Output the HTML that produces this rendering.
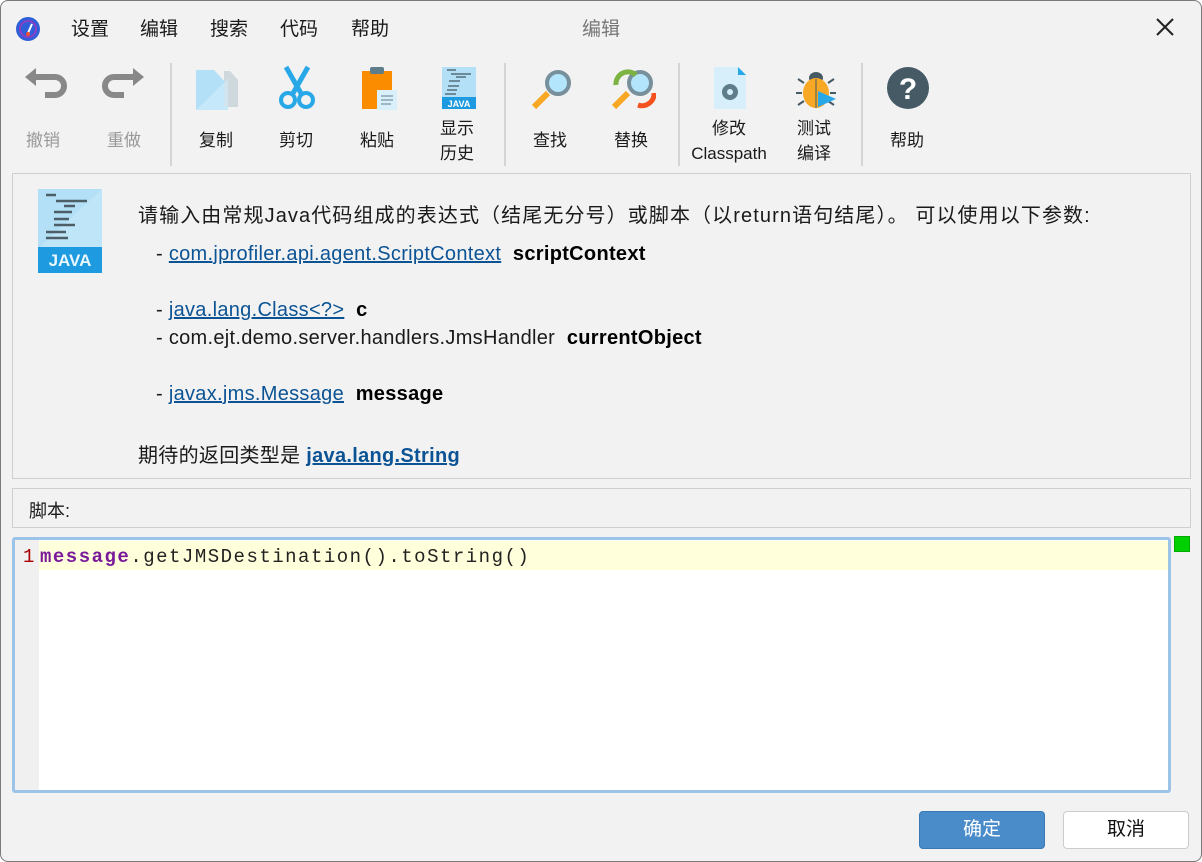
<!DOCTYPE html>
<html><head><meta charset="utf-8"><style>
body{margin:0;width:1202px;height:862px;overflow:hidden;background:#fff;font-family:"Liberation Sans","Noto Sans CJK SC",sans-serif;}
.win{position:absolute;left:0;top:0;width:1200px;height:860px;border:1px solid #7a7a7a;border-radius:8px;background:#f2f2f2;overflow:hidden}
.t{position:absolute;white-space:nowrap;color:#1a1a1a}
.menu{font-size:19px;top:13px}
.lbl{font-size:17px;text-align:center;width:90px;line-height:25px}
.sep{position:absolute;top:62px;width:2px;height:103px;background:#d4d4d4}
.ic{position:absolute}
a{color:#0b5394;text-decoration:underline}
.info{font-size:20px;letter-spacing:.3px}
</style></head><body><div class="win">
<svg class="ic" style="left:14px;top:15px" width="26" height="26"><circle cx="13" cy="13" r="12" fill="#2e5fd8"/><circle cx="13" cy="13" r="8" fill="none" stroke="#8a3fc4" stroke-width="2"/><line x1="13" y1="17" x2="17" y2="8" stroke="#fff" stroke-width="2"/><circle cx="13" cy="18" r="2" fill="#f05030"/></svg>
<div class="t menu" style="left:70px">设置</div><div class="t menu" style="left:139px">编辑</div><div class="t menu" style="left:209px">搜索</div><div class="t menu" style="left:279px">代码</div><div class="t menu" style="left:350px">帮助</div>
<div class="t menu" style="left:581px;color:#777">编辑</div>
<svg class="ic" style="left:1154px;top:16px" width="20" height="20"><path d="M2 2L18 18M18 2L2 18" stroke="#222" stroke-width="2"/></svg>
<svg class="ic" style="left:22px;top:66px" width="44" height="36"><path d="M10 10H32a9 9 0 0 1 0 18H22" fill="none" stroke="#888" stroke-width="6"/><path d="M2 10L13 1V19Z" fill="#888"/></svg>
<svg class="ic" style="left:101px;top:66px" width="44" height="36"><path d="M34 10H12a9 9 0 0 0 0 18H22" fill="none" stroke="#888" stroke-width="6"/><path d="M42 10L31 1V19Z" fill="#888"/></svg>
<div class="t lbl" style="left:-3px;top:127px;color:#999">撤销</div><div class="t lbl" style="left:78px;top:127px;color:#999">重做</div>
<div class="sep" style="left:169px"></div>
<svg class="ic" style="left:195px;top:68px" width="44" height="42"><path d="M0 1H18L32 16V41H0Z" fill="#b3e0f7"/><path d="M28 2H34L42 11V38H28Z" fill="#cfd8dc"/><path d="M0 41L32 10V41Z" fill="#d0eefc" opacity=".6"/></svg>
<svg class="ic" style="left:277px;top:64px" width="38" height="46"><path d="M8 2L24 30M30 2L14 30" stroke="#29a8e8" stroke-width="5"/><circle cx="10" cy="35" r="7" fill="none" stroke="#29a8e8" stroke-width="4"/><circle cx="28" cy="35" r="7" fill="none" stroke="#29a8e8" stroke-width="4"/></svg>
<svg class="ic" style="left:360px;top:65px" width="38" height="44"><rect x="1" y="5" width="30" height="38" fill="#fb8c00"/><rect x="9" y="1" width="14" height="7" rx="2" fill="#607d8b"/><path d="M16 24H36V44H16Z" fill="#d9f0fb"/><path d="M20 30H32M20 34H32M20 38H30" stroke="#607d8b"/></svg>
<svg class="ic" style="left:441px;top:66px" width="34" height="42"><rect width="34" height="42" fill="#b3e0f7"/><rect y="30" width="34" height="12" fill="#1e9be0"/><text x="17" y="40" font-size="9" font-weight="bold" fill="#fff" text-anchor="middle" font-family="Liberation Sans">JAVA</text><path d="M5 3H14M9 7H29M14 10H24M7 14H18M6 19H17M5 23H15M3 27H14" stroke="#546e7a" stroke-width="1.5"/></svg>
<div class="t lbl" style="left:170px;top:127px">复制</div><div class="t lbl" style="left:250px;top:127px">剪切</div><div class="t lbl" style="left:331px;top:127px">粘贴</div><div class="t lbl" style="left:411px;top:115px">显示<br>历史</div>
<div class="sep" style="left:503px"></div>
<svg class="ic" style="left:529px;top:66px" width="44" height="44"><path d="M4 40L18 26" stroke="#f9a825" stroke-width="6"/><circle cx="28" cy="16" r="11" fill="#b3e5fc" stroke="#78909c" stroke-width="4"/></svg>
<svg class="ic" style="left:609px;top:66px" width="46" height="46"><path d="M4 40L18 26" stroke="#f9a825" stroke-width="6"/><circle cx="30" cy="16" r="11" fill="#b3e5fc" stroke="#78909c" stroke-width="4"/><path d="M6 18a12 12 0 0 1 20 -10" fill="none" stroke="#7cb342" stroke-width="5"/><path d="M44 26a12 12 0 0 1 -16 12" fill="none" stroke="#f4511e" stroke-width="5"/></svg>
<div class="t lbl" style="left:504px;top:127px">查找</div><div class="t lbl" style="left:585px;top:127px">替换</div>
<div class="sep" style="left:677px"></div>
<svg class="ic" style="left:713px;top:66px" width="32" height="42"><path d="M0 0H24L32 8V42H0Z" fill="#d6effb"/><path d="M24 0L32 8H24Z" fill="#29a8e8"/><circle cx="16" cy="25" r="8" fill="#607d8b"/><circle cx="16" cy="25" r="3" fill="#d6effb"/></svg>
<svg class="ic" style="left:793px;top:66px" width="44" height="42"><path d="M4 12L10 16M40 12L34 16M2 26H8M42 26H36M4 38L10 34M40 38L34 34" stroke="#455a64" stroke-width="2"/><ellipse cx="22" cy="11" rx="7" ry="6" fill="#455a64"/><ellipse cx="22" cy="26" rx="13" ry="15" fill="#f9a825"/><path d="M22 12V41" stroke="#455a64"/><path d="M24 24L42 32L24 40Z" fill="#29a8e8"/></svg>
<div class="t lbl" style="left:683px;top:115px">修改<br>Classpath</div><div class="t lbl" style="left:768px;top:115px">测试<br>编译</div>
<div class="sep" style="left:860px"></div>
<svg class="ic" style="left:886px;top:66px" width="42" height="42"><circle cx="21" cy="21" r="21" fill="#455a64"/><text x="21" y="32" font-size="30" font-weight="bold" fill="#fff" text-anchor="middle" font-family="Liberation Sans">?</text></svg>
<div class="t lbl" style="left:861px;top:127px">帮助</div>
<div style="position:absolute;left:11px;top:172px;width:1177px;height:304px;border:1px solid #cfcfcf"></div>
<svg class="ic" style="left:37px;top:188px" width="64" height="84"><rect width="64" height="84" fill="#b3e0f7"/><path d="M64 0V60H0Z" fill="#c9ebfa" opacity=".5"/><rect y="58" width="64" height="26" fill="#1e9be0"/><text x="32" y="77" font-size="17" font-weight="bold" fill="#e8f6fd" text-anchor="middle" font-family="Liberation Sans">JAVA</text><path d="M8 6H18M18 12H49M26 17H37M16 23H34M16 30H31M16 36H37M8 43H28M8 49H30" stroke="#4d5e66" stroke-width="2.5"/></svg>
<div class="t info" style="left:137px;top:198px;letter-spacing:1.1px">请输入由常规Java代码组成的表达式（结尾无分号）或脚本（以return语句结尾）。 可以使用以下参数:</div>
<div class="t info" style="left:155px;top:242px">- <a>com.jprofiler.api.agent.ScriptContext</a>&nbsp; <b style="color:#000">scriptContext</b></div>
<div class="t info" style="left:155px;top:298px">- <a>java.lang.Class&lt;?&gt;</a>&nbsp; <b style="color:#000">c</b></div>
<div class="t info" style="left:155px;top:326px">- com.ejt.demo.server.handlers.JmsHandler&nbsp; <b style="color:#000">currentObject</b></div>
<div class="t info" style="left:155px;top:382px">- <a>javax.jms.Message</a>&nbsp; <b style="color:#000">message</b></div>
<div class="t info" style="left:137px;top:438px">期待的返回类型是 <a style="font-weight:bold">java.lang.String</a></div>
<div style="position:absolute;left:11px;top:487px;width:1177px;height:38px;border:1px solid #cfcfcf"></div>
<div class="t" style="left:28px;top:496px;font-size:18px">脚本:</div>
<div style="position:absolute;left:11px;top:536px;width:1153px;height:250px;border:3px solid #9cc3e8;border-radius:3px;background:#fff"></div>
<div style="position:absolute;left:14px;top:539px;width:24px;height:250px;background:#f0f0f0"></div>
<div style="position:absolute;left:38px;top:540px;width:1129px;height:29px;background:#ffffdb"></div>
<div class="t" style="left:22px;top:545px;font-family:'Liberation Mono',monospace;font-size:19px;color:#a00">1</div>
<div class="t" style="left:39px;top:545px;font-family:'Liberation Mono',monospace;font-size:19px;letter-spacing:1.5px;color:#222"><b style="color:#7a1a9a">message</b>.getJMSDestination().toString()</div>
<div style="position:absolute;left:1173px;top:535px;width:14px;height:14px;background:#00d000;border:1px solid #0a0"></div>
<div style="position:absolute;left:918px;top:810px;width:124px;height:36px;background:#4a8bc9;border:1px solid #3a78b5;border-radius:4px;color:#fff;font-size:19px;text-align:center;line-height:36px">确定</div>
<div style="position:absolute;left:1062px;top:810px;width:124px;height:36px;background:#fff;border:1px solid #ccc;border-radius:4px;color:#111;font-size:19px;text-align:center;line-height:36px">取消</div>
</div></body></html>
